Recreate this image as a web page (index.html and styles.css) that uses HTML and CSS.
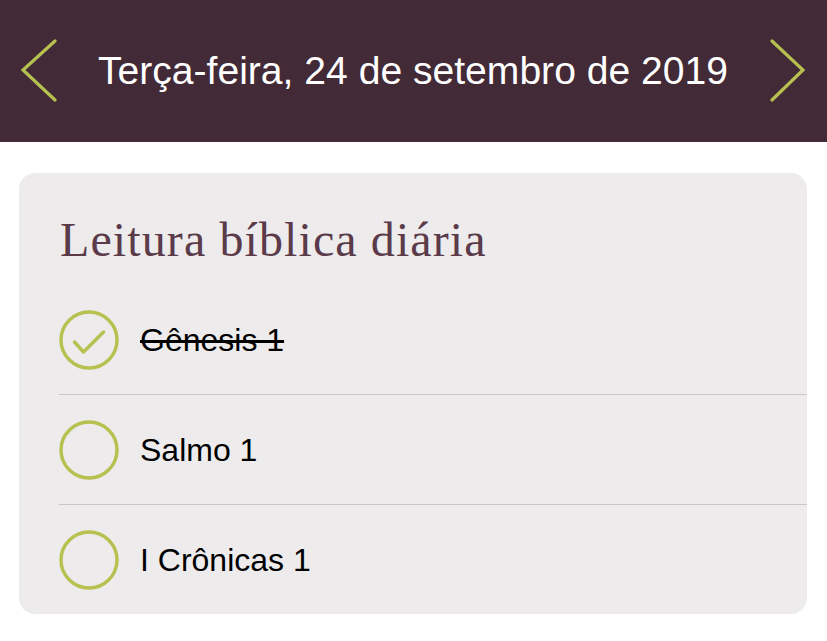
FILE: index.html
```html
<!DOCTYPE html>
<html lang="pt">
<head>
<meta charset="utf-8">
<title>Leitura bíblica diária</title>
<link rel="stylesheet" href="styles.css">
</head>
<body>
<header class="topbar">
  <svg class="chev" width="40" height="64" viewBox="0 0 40 64"><polyline points="35,2 3,31 35,61" fill="none" stroke="#b6c14f" stroke-width="3.2" stroke-linecap="round" stroke-linejoin="miter"/></svg>
  <h1 class="date">Terça-feira, 24 de setembro de 2019</h1>
  <svg class="chev" width="40" height="64" viewBox="0 0 40 64"><polyline points="6,2 37,31 6,61" fill="none" stroke="#b6c14f" stroke-width="3.2" stroke-linecap="round" stroke-linejoin="miter"/></svg>
</header>
<main class="card">
  <h2 class="title">Leitura bíblica diária</h2>
  <ul class="list">
    <li class="row done">
      <svg class="check" width="60" height="60" viewBox="0 0 60 60"><circle cx="30" cy="30" r="28" fill="none" stroke="#b6c14f" stroke-width="3.4"/><polyline points="15.5,32 24.5,42 44.5,22" fill="none" stroke="#b6c14f" stroke-width="3.4" stroke-linecap="round" stroke-linejoin="round"/></svg>
      <span class="label">Gênesis 1</span>
    </li>
    <li class="row">
      <svg class="check" width="60" height="60" viewBox="0 0 60 60"><circle cx="30" cy="30" r="28" fill="none" stroke="#b6c14f" stroke-width="3.4"/></svg>
      <span class="label">Salmo 1</span>
    </li>
    <li class="row">
      <svg class="check" width="60" height="60" viewBox="0 0 60 60"><circle cx="30" cy="30" r="28" fill="none" stroke="#b6c14f" stroke-width="3.4"/></svg>
      <span class="label">I Crônicas 1</span>
    </li>
  </ul>
</main>
</body>
</html>
```
FILE: styles.css
```css
* { box-sizing: border-box; }
html, body { margin: 0; padding: 0; background: #ffffff; }
body { font-family: "Liberation Sans", Arial, sans-serif; width: 827px; }

.topbar {
  height: 142px;
  background: #422a37;
  display: flex;
  align-items: center;
  justify-content: space-between;
  padding: 0 21px 0 20px;
}
.chev { display: block; flex: none; }
.date {
  margin: 0;
  color: #ffffff;
  font-weight: 400;
  font-size: 39.1px;
  line-height: 1;
  letter-spacing: 0;
}

.card {
  margin: 31px 20px 0 19px;
  background: #edebec;
  border-radius: 16px;
  padding: 0 0 0 40px;
  height: 441px;
}
.title {
  margin: 0;
  padding: 42px 0 0 1px;
  height: 112px;
  font-family: "Liberation Serif", "Times New Roman", serif;
  font-weight: 400;
  font-size: 48px;
  line-height: 50px;
  letter-spacing: 1.1px;
  color: #5b3a49;
}
.list { list-style: none; margin: 0; padding: 0; }
.row {
  height: 110px;
  display: flex;
  align-items: center;
  gap: 21px;
  border-bottom: 1px solid #c8c6c9;
}
.check { display: block; flex: none; }
.label {
  font-size: 32px;
  color: #000000;
  line-height: 1;
}
.done .label {
  text-decoration: line-through;
  text-decoration-thickness: 3px;
}
```
